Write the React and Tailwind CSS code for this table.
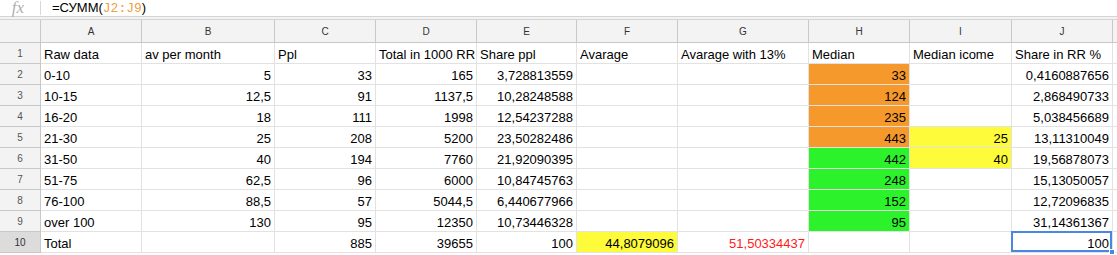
import React from "react";

const cols = ["A", "B", "C", "D", "E", "F", "G", "H", "I", "J"];

const rows = [
  ["Raw data", "av per month", "Ppl", "Total in 1000 RR", "Share ppl", "Avarage", "Avarage with 13%", "Median", "Median icome", "Share in RR %"],
  ["0-10", "5", "33", "165", "3,728813559", "", "", "33", "", "0,4160887656"],
  ["10-15", "12,5", "91", "1137,5", "10,28248588", "", "", "124", "", "2,868490733"],
  ["16-20", "18", "111", "1998", "12,54237288", "", "", "235", "", "5,038456689"],
  ["21-30", "25", "208", "5200", "23,50282486", "", "", "443", "25", "13,11310049"],
  ["31-50", "40", "194", "7760", "21,92090395", "", "", "442", "40", "19,56878073"],
  ["51-75", "62,5", "96", "6000", "10,84745763", "", "", "248", "", "15,13050057"],
  ["76-100", "88,5", "57", "5044,5", "6,440677966", "", "", "152", "", "12,72096835"],
  ["over 100", "130", "95", "12350", "10,73446328", "", "", "95", "", "31,14361367"],
  ["Total", "", "885", "39655", "100", "44,8079096", "51,50334437", "", "", "100"],
];

function cellBg(r, c) {
  if (c === 7 && r >= 1 && r <= 4) return "bg-[#f6992c]";
  if (c === 7 && r >= 5 && r <= 8) return "bg-[#2cf22c]";
  if (c === 8 && (r === 4 || r === 5)) return "bg-[#fdfb3a]";
  if (c === 5 && r === 9) return "bg-[#fdfb3a]";
  return "bg-white";
}

export default function App() {
  const grid =
    "grid grid-cols-[41px_101px_133px_101px_101px_100px_101px_131px_101px_102px_101px_1fr]";
  return (
    <div className="w-[1117px] h-[255px] overflow-hidden bg-white font-['Liberation_Sans',Arial,sans-serif] text-[13px] text-black">
      {/* formula bar */}
      <div className="h-[17px] flex items-center border-b border-[#d4d4d4] bg-white">
        <div className="w-[40px] h-full flex items-center justify-center">
          <span className="font-['Liberation_Serif',serif] italic text-[17px] leading-[16px] text-[#b0b0b0] -ml-[4px]">
            fx
          </span>
        </div>
        <div className="w-px h-[14px] bg-[#d8d8d8]" />
        <div className="pl-[11px] leading-none whitespace-pre">
          <span>=СУММ(</span>
          <span className="font-['Liberation_Mono',monospace] text-[#f0a043]">J2:J9</span>
          <span>)</span>
        </div>
      </div>
      <div className="h-[3px] bg-[#f3f3f3] border-b border-[#d4d4d4]" />
      {/* header */}
      <div className={grid + " h-[23px]"}>
        <div className="bg-[#f3f3f3] border-r border-b border-[#c8c8c8]" />
        {cols.map((c) => (
          <div
            key={c}
            className="bg-[#f3f3f3] border-r border-b border-[#c8c8c8] flex items-center justify-center text-[10px] text-[#333]"
          >
            {c}
          </div>
        ))}
        <div className="bg-[#f3f3f3] border-b border-[#c8c8c8]" />
      </div>
      {rows.map((row, r) => (
        <div key={r} className={grid + " h-[21px]"}>
          <div
            className={
              "border-r border-b border-[#c8c8c8] flex items-center justify-center text-[10px] " +
              (r === 9 ? "text-[#333] bg-[#dcdcdc]" : "text-[#555] bg-[#f3f3f3]")
            }
          >
            {r + 1}
          </div>
          {row.map((v, c) => {
            const isText = r === 0 || c === 0;
            const selected = r === 9 && c === 9;
            return (
              <div
                key={c}
                className={
                  "relative border-r border-b border-[#e2e2e2] flex items-center px-[3px] whitespace-nowrap overflow-visible leading-none " +
                  cellBg(r, c) +
                  (isText ? " justify-start" : " justify-end") +
                  (r === 9 && c === 6 ? " text-[#ff1a1a]" : "")
                }
              >
                <span className="relative top-[1px]">{v}</span>
                {selected && (
                  <>
                    <div className="absolute -left-px -top-px right-0 bottom-0 border-2 border-[#4a87e0]" />
                    <div className="absolute -right-[3px] -bottom-[3px] w-[6px] h-[6px] bg-[#4a87e0] border border-white" />
                  </>
                )}
              </div>
            );
          })}
          <div className="bg-white border-b border-[#e2e2e2]" />
        </div>
      ))}
    </div>
  );
}
